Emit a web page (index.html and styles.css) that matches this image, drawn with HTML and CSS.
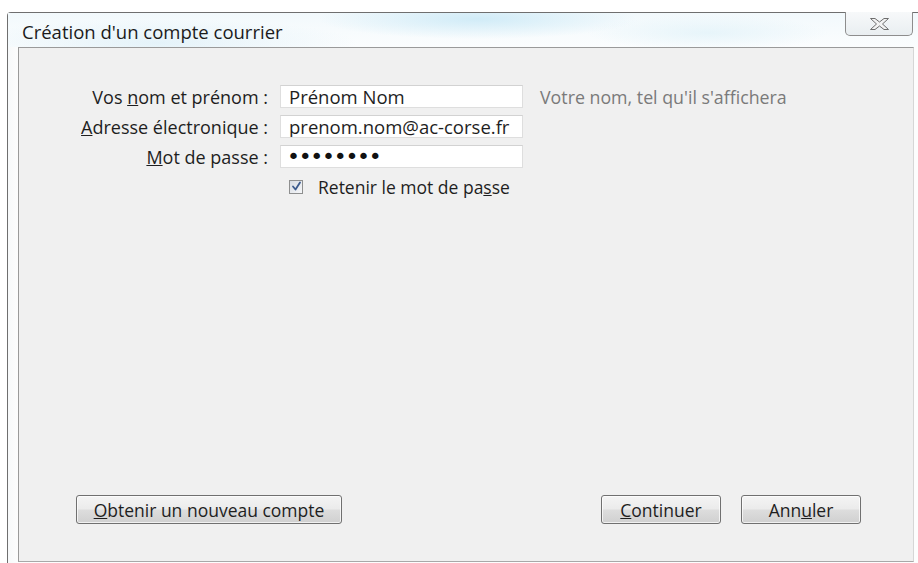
FILE: index.html
```html
<!DOCTYPE html>
<html lang="fr">
<head>
<meta charset="utf-8">
<title>Création d'un compte courrier</title>
<link rel="stylesheet" href="styles.css">
</head>
<body>
<div class="window">
  <div class="titlebar">
    <span class="title">Création d'un compte courrier</span>
    <button class="close" type="button" aria-label="Fermer">
      <svg width="19" height="12" viewBox="0 0 19 12">
        <polygon points="0.5,0.5 5,0.5 9.5,4 14,0.5 18.5,0.5 12.5,6 18.5,11.5 14,11.5 9.5,8 5,11.5 0.5,11.5 6.5,6" fill="#f3f3f3" stroke="#6e6e6e" stroke-width="1" stroke-linejoin="round"/>
      </svg>
    </button>
  </div>
  <div class="frame">
    <div class="panel">
      <form class="form">
        <label class="label" for="nom">Vos <u>n</u>om et prénom :</label>
        <input class="field" id="nom" type="text" value="Prénom Nom">
        <span class="hint">Votre nom, tel qu'il s'affichera</span>

        <label class="label" for="mail"><u>A</u>dresse électronique :</label>
        <input class="field" id="mail" type="text" value="prenom.nom@ac-corse.fr">
        <span></span>

        <label class="label" for="pass"><u>M</u>ot de passe :</label>
        <input class="field pass" id="pass" type="password" value="motdepas">
        <span></span>

        <span></span>
        <label class="remember"><span class="box"><svg width="11" height="11" viewBox="0 0 11 11"><path d="M2 5.5 L4.5 8.5 L9 1.5" fill="none" stroke="#3b5a8c" stroke-width="1.8" stroke-linecap="round" stroke-linejoin="round"/></svg></span><span>Retenir le mot de pa<u>s</u>se</span></label>
        <span></span>
      </form>
      <div class="actions">
        <button class="btn btn-wide" type="button"><u>O</u>btenir un nouveau compte</button>
        <div class="right">
          <button class="btn btn-main" type="button"><u>C</u>ontinuer</button>
          <button class="btn btn-main" type="button">Ann<u>u</u>ler</button>
        </div>
      </div>
    </div>
  </div>
</div>
</body>
</html>
```
FILE: styles.css
```css
html, body {
  margin: 0;
  padding: 0;
  background: #ffffff;
  width: 918px;
  height: 563px;
  overflow: hidden;
  font-family: "Open Sans", "Noto Sans", sans-serif;
  color: #1e1e1e;
}

.window {
  margin: 12px 0 0 7px;
  height: 551px;
  border-left: 1px solid #6f6f6f;
  border-top: 1px solid #6f6f6f;
  border-top-left-radius: 4px;
  background: linear-gradient(180deg, #eef6fa 0%, #ffffff 40%, #fafafa 100%);
  display: flex;
  flex-direction: column;
}

.titlebar {
  height: 34px;
  display: flex;
  align-items: flex-start;
  justify-content: space-between;
  background:
    radial-gradient(ellipse 160px 20px at 470px 6px, rgba(200, 232, 246, 0.8), transparent),
    radial-gradient(ellipse 200px 24px at 150px 30px, rgba(214, 236, 246, 0.6), transparent),
    radial-gradient(ellipse 120px 18px at 700px 20px, rgba(220, 240, 248, 0.6), transparent),
    linear-gradient(180deg, #f2f9fc, #fbfdfe);
}

.title {
  padding: 9px 0 0 14px;
  font-size: 18.5px;
  line-height: 20px;
  color: #1b1b1b;
}

.close {
  width: 68px;
  height: 24px;
  margin: -1px 5px 0 0;
  padding: 0;
  border: 1px solid #8d8d8d;
  border-top: none;
  border-radius: 0 0 5px 5px;
  background: linear-gradient(180deg, #f7f9fa, #e9eef1);
  display: flex;
  align-items: center;
  justify-content: center;
}

.frame {
  flex: 1;
  padding: 0 4px 2px 10px;
  display: flex;
  background: linear-gradient(90deg, #f7f9fa 0, #fdfdfd 11px);
}

.panel {
  flex: 1;
  background: #f0f0f0;
  border: 1px solid #9a9a9a;
  border-right-color: #d6d6d6;
  border-bottom-color: #a8a8a8;
  display: flex;
  flex-direction: column;
  justify-content: space-between;
}

.form {
  margin: 37px 0 0 0;
  display: grid;
  grid-template-columns: 249px 243px 1fr;
  grid-auto-rows: 23px;
  column-gap: 12px;
  row-gap: 7px;
  align-items: center;
}

.label {
  text-align: right;
  font-size: 18px;
  color: #1e1e1e;
  white-space: nowrap;
}

.field {
  box-sizing: border-box;
  height: 23px;
  width: 243px;
  margin: 0;
  padding: 0 8px;
  border: 1px solid #dedede;
  border-top-color: #d2d2d2;
  background: #ffffff;
  font-family: inherit;
  font-size: 18.5px;
  color: #1e1e1e;
  outline: none;
}

.pass {
  font-family: "DejaVu Sans", sans-serif;
  font-size: 22px;
  letter-spacing: -1.3px;
  padding-left: 6px;
  color: #111111;
}

.hint {
  padding-left: 5px;
  font-size: 17.8px;
  color: #7a7a7a;
  white-space: nowrap;
}

.remember {
  display: flex;
  align-items: center;
  gap: 15px;
  padding-left: 9px;
  font-size: 17.5px;
  color: #1e1e1e;
  white-space: nowrap;
}

.box {
  box-sizing: border-box;
  width: 14px;
  height: 14px;
  border: 1px solid #8e8f8f;
  background: linear-gradient(135deg, #d6dbe2, #f6f7f9);
  display: flex;
  align-items: center;
  justify-content: center;
}

.actions {
  display: flex;
  justify-content: space-between;
  align-items: center;
  padding: 0 52px 37px 57px;
}

.right {
  display: flex;
  gap: 20px;
}

.btn {
  box-sizing: border-box;
  height: 29px;
  margin: 0;
  padding: 0 6px;
  border: 1px solid #707070;
  border-radius: 3px;
  background: linear-gradient(180deg, #f4f4f4 0%, #ebebeb 48%, #dddddd 52%, #d0d0d0 100%);
  box-shadow: inset 0 0 0 1px rgba(255, 255, 255, 0.7);
  font-family: inherit;
  font-size: 17.5px;
  line-height: 20px;
  color: #1e1e1e;
  white-space: nowrap;
}

.btn-wide {
  width: 266px;
}

.btn-main {
  width: 120px;
}
```
